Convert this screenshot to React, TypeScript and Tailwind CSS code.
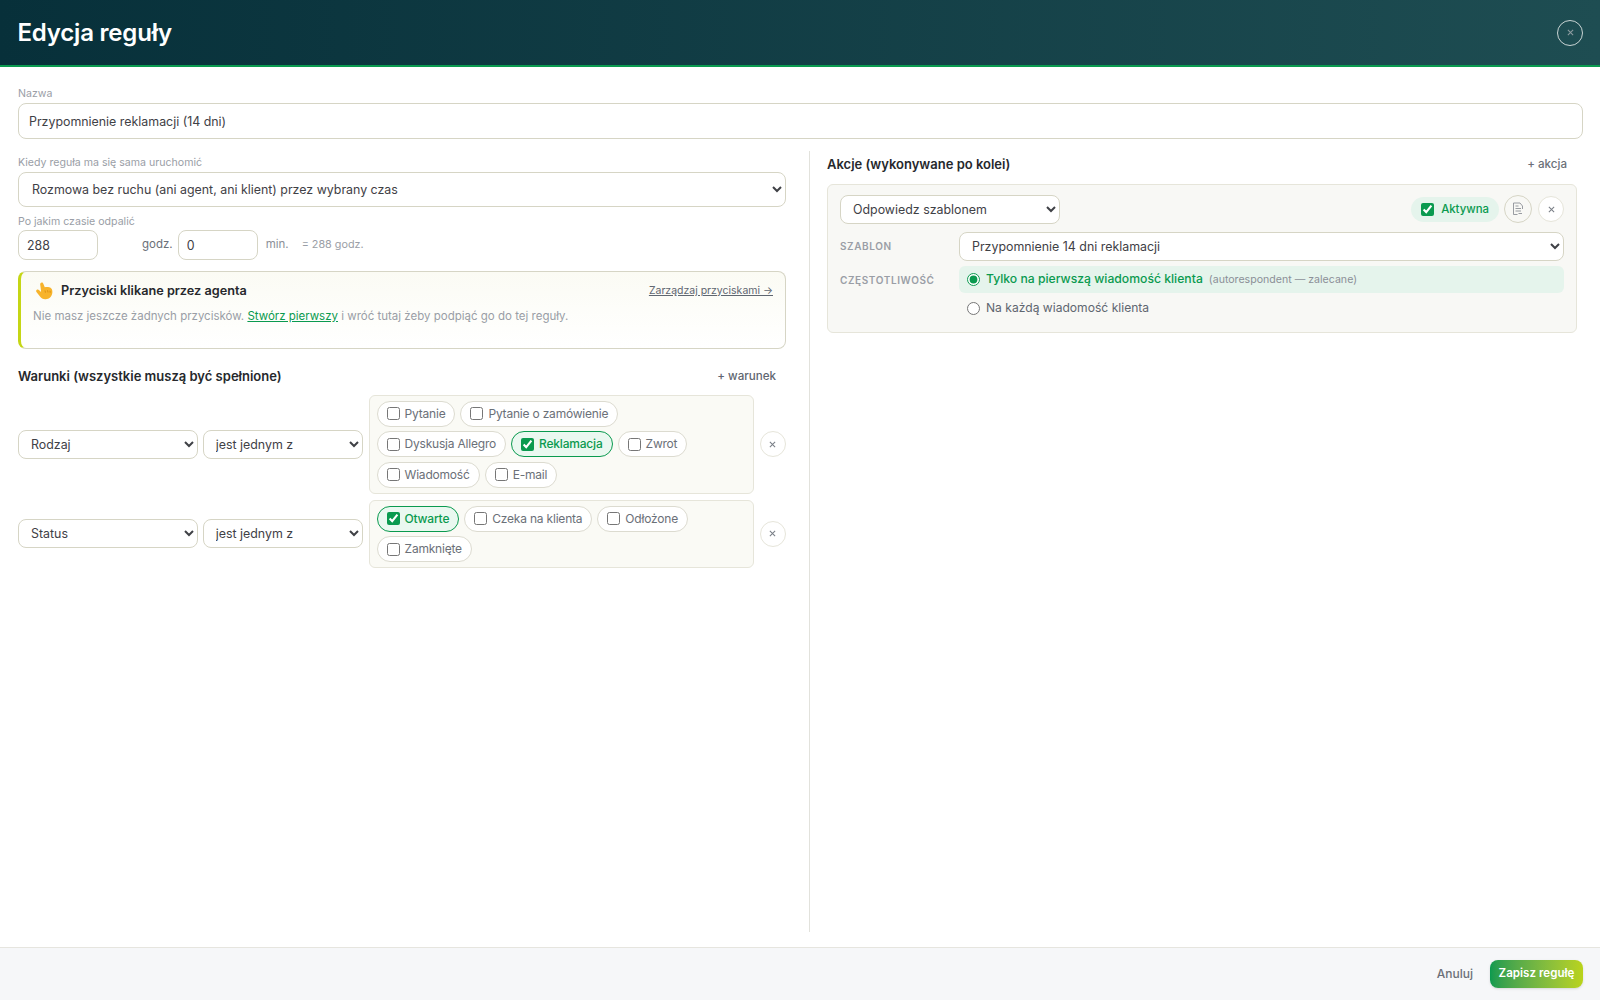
import React from 'react';

const FONT = "font-['Inter','Noto_Sans',sans-serif]";

const selectCls = 'bg-white border border-[#d6d5c5] rounded-lg text-[#3f4146] text-[12.4px] outline-none';

function XButton({ className = '' }: { className?: string }) {
  return (
    <button className={`w-[26px] h-[26px] rounded-full border border-[#e6e5da] bg-white flex items-center justify-center text-[#7a7f87] shrink-0 ${className}`}>
      <svg width="7" height="7" viewBox="0 0 8 8" fill="none" stroke="currentColor" strokeWidth="1.2"><path d="M1 1l6 6M7 1L1 7" /></svg>
    </button>
  );
}

function Chip({ label, checked = false }: { label: string; checked?: boolean }) {
  return (
    <label className={`h-[26px] flex items-center gap-[5px] rounded-full border pl-[9px] pr-[9px] text-[12px] tracking-[-0.2px] ${checked ? 'border-[#0a9a4f] bg-[#eaf8f0] text-[#0a9a4f] font-medium' : 'border-[#dcdbd0] bg-white text-[#6b7078]'}`}>
      <input type="checkbox" defaultChecked={checked} className="w-[13px] h-[13px] m-0 accent-[#0a9a4f]" />
      {label}
    </label>
  );
}

function ConditionRow({ field, chips }: { field: string; chips: { label: string; checked?: boolean }[][] }) {
  return (
    <div className="flex items-center">
      <select defaultValue={field} className={`${selectCls} w-[180px] h-[29px] pl-2`}>
        <option>{field}</option>
      </select>
      <select className={`${selectCls} w-[160px] h-[29px] pl-2 ml-[5px]`}>
        <option>jest jednym z</option>
      </select>
      <div className="ml-[6px] w-[386px] border border-[#e6e5da] rounded-md bg-[#fafaf5] pl-[7px] py-[5px] flex flex-col gap-[4.5px]">
        {chips.map((row, i) => (
          <div key={i} className="flex gap-[5px]">
            {row.map((c) => <Chip key={c.label} {...c} />)}
          </div>
        ))}
      </div>
      <XButton className="ml-[6px]" />
    </div>
  );
}

export default function App() {
  return (
    <div className={`h-screen flex flex-col bg-white ${FONT}`}>
      <header className="h-[67px] shrink-0 border-b-2 border-[#0a9a4f] bg-gradient-to-r from-[#07303a] to-[#1e4d52] flex items-center justify-between pl-[17.500px] pr-[17px]">
        <h1 className="text-[24px] font-semibold text-white tracking-[-0.2px]">Edycja reguły</h1>
        <button className="w-[26px] h-[26px] rounded-full border border-[#c9d4d4] flex items-center justify-center text-[#8d9ba0]">
          <svg width="7" height="7" viewBox="0 0 8 8" fill="none" stroke="currentColor" strokeWidth="1.2"><path d="M1 1l6 6M7 1L1 7" /></svg>
        </button>
      </header>

      <main className="flex-1 min-h-0 flex flex-col pl-[18px] pr-[17px] pt-[20px] pb-[15px]">
        <div className="text-[10.6px] leading-[14px] text-[#9a9ea6]">Nazwa</div>
        <input defaultValue="Przypomnienie reklamacji (14 dni)" className="mt-[2px] h-[36px] w-full border border-[#d6d5c5] rounded-lg px-[10px] text-[12.4px] text-[#3f4146] outline-none" />

        <div className="flex flex-1 min-h-0 mt-[12px]">
          {/* lewa kolumna */}
          <div className="w-[792px] pr-[23px] border-r border-[#e2e2dc] pt-[5px]">
            <div className="text-[10.6px] leading-[14px] text-[#9a9ea6]">Kiedy reguła ma się sama uruchomić</div>
            <select className={`${selectCls} mt-[2px] w-full h-[35px] pl-[9px]`}>
              <option>Rozmowa bez ruchu (ani agent, ani klient) przez wybrany czas</option>
            </select>
            <div className="mt-[8px] text-[10.6px] leading-[14px] text-[#9a9ea6]">Po jakim czasie odpalić</div>
            <div className="flex items-center mt-[1px] text-[11.5px]">
              <input defaultValue="288" className="w-[80px] h-[30px] border border-[#d6d5c5] rounded-lg px-[8px] text-[12.4px] text-[#3f4146] outline-none" />
              <span className="ml-[44px] text-[#6b7078]">godz.</span>
              <input defaultValue="0" className="ml-[5px] w-[80px] h-[30px] border border-[#d6d5c5] rounded-lg px-[8px] text-[12.4px] text-[#3f4146] outline-none" />
              <span className="ml-[8px] text-[#8b8f97]">min.</span>
              <span className="ml-[13px] text-[10.8px] text-[#9a9ea6]">= 288 godz.</span>
            </div>

            <section className="mt-[11px] h-[78px] border border-[#d6d5c5] border-l-[3px] border-l-[#c5d615] rounded-lg bg-gradient-to-b from-[#fbfbf4] to-white pl-[12px] pr-[12px] pt-[9px]">
              <div className="flex items-center h-[20px]">
                <svg width="20" height="20" viewBox="0 0 18 18" className="ml-[2px]">
                  <path d="M5.6 1.6c.8-.4 1.6.1 1.9.8l1.3 3.3c1.9-.4 4.4-.2 5.6.8 1.1.9 1.4 2.4 1.2 4-.3 2.4-1.700 5-4.900 5.700-2.900.6-5-.5-6.200-2.300L1.300 9.800c-.5-.8-.3-1.600.3-2 .7-.4 1.500-.2 2 .4l1.400 1.500.5-.4L4.700 3.300c-.2-.7.2-1.400.9-1.700z" fill="#f7b32b" />
                  <path d="M9 8.500l.4 2M11.300 8.300l.4 2M13.500 8.800l.2 1.800" stroke="#d98c10" strokeWidth=".8" fill="none" />
                </svg>
                <span className="ml-[6px] text-[12.7px] font-semibold text-[#26282c]">Przyciski klikane przez agenta</span>
                <a className="ml-auto text-[10.5px] text-[#5f6670] underline">Zarządzaj przyciskami →</a>
              </div>
              <p className="mt-[7px] text-[11.5px] text-[#9a9ea6]">
                Nie masz jeszcze żadnych przycisków. <a className="text-[#0a9a4f] underline">Stwórz pierwszy</a> i wróć tutaj żeby podpiąć go do tej reguły.
              </p>
            </section>

            <div className="mt-[18px] flex items-center justify-between pr-[10px]">
              <h2 className="text-[13px] font-semibold text-[#26282c]">Warunki (wszystkie muszą być spełnione)</h2>
              <button className="text-[11.6px] font-medium text-[#5f6670]">+ warunek</button>
            </div>

            <div className="mt-[8px] flex flex-col gap-[6px]">
              <ConditionRow
                field="Rodzaj"
                chips={[
                  [{ label: 'Pytanie' }, { label: 'Pytanie o zamówienie' }],
                  [{ label: 'Dyskusja Allegro' }, { label: 'Reklamacja', checked: true }, { label: 'Zwrot' }],
                  [{ label: 'Wiadomość' }, { label: 'E-mail' }],
                ]}
              />
              <ConditionRow
                field="Status"
                chips={[
                  [{ label: 'Otwarte', checked: true }, { label: 'Czeka na klienta' }, { label: 'Odłożone' }],
                  [{ label: 'Zamknięte' }],
                ]}
              />
            </div>
          </div>

          {/* prawa kolumna */}
          <div className="flex-1 pl-[17px] pt-[5px]">
            <div className="flex items-center justify-between pr-[16px] h-[17px]">
              <h2 className="text-[13px] font-semibold text-[#26282c]">Akcje (wykonywane po kolei)</h2>
              <button className="text-[11.6px] font-medium text-[#6b7078]">+ akcja</button>
            </div>
            <div className="mt-[11px] mr-[6px] h-[149px] border border-[#e6e5da] rounded-md bg-[#f8f8f5] pl-[12px] pr-[12px] pt-[9px]">
              <div className="flex items-center h-[30px]">
                <select className={`${selectCls} w-[220px] h-[29px] pl-[8px]`}>
                  <option>Odpowiedz szablonem</option>
                </select>
                <label className="ml-auto h-[25px] flex items-center gap-[7px] rounded-full bg-[#e5f4ec] pl-[10px] pr-[10px] text-[11.4px] font-medium text-[#0a9a4f]">
                  <input type="checkbox" defaultChecked className="w-[13px] h-[13px] m-0 accent-[#0a9a4f]" />
                  <span className="pt-[1px]">Aktywna</span>
                </label>
                <button className="ml-[5px] w-[28px] h-[28px] rounded-full border border-[#d6d5c5] flex items-center justify-center text-[#8d9198]">
                  <svg width="12" height="14" viewBox="0 0 12 14" fill="none" stroke="currentColor" strokeWidth=".9">
                    <path d="M1.500 1h6.500l2.500 3v3M1.500 1v11.500h4M3.500 4h3M3.500 6.500h5.500M3.500 9h5.500M6.500 11.500h3.500" />
                  </svg>
                </button>
                <XButton className="ml-[6px]" />
              </div>
              <div className="flex items-center mt-[8px]">
                <span className="w-[119px] text-[10px] font-semibold tracking-[0.6px] text-[#9a9ea6]">SZABLON</span>
                <select className={`${selectCls} flex-1 h-[29px] pl-[8px]`}>
                  <option>Przypomnienie 14 dni reklamacji</option>
                </select>
              </div>
              <div className="flex mt-[5px]">
                <span className="w-[119px] pt-[7px] text-[10px] font-semibold tracking-[0.6px] text-[#9a9ea6]">CZĘSTOTLIWOŚĆ</span>
                <div className="flex-1">
                  <label className="h-[27px] flex items-center rounded-md bg-[#e5f4ec] pl-[8px] text-[12.2px] font-medium text-[#0a9a4f]">
                    <input type="radio" name="freq" defaultChecked className="w-[13px] h-[13px] m-0 accent-[#0a9a4f]" />
                    <span className="ml-[6px]">Tylko na pierwszą wiadomość klienta</span>
                    <span className="ml-[6px] text-[10.6px] font-normal text-[#8b8f97]">(autorespondent — zalecane)</span>
                  </label>
                  <label className="h-[27px] mt-[2px] flex items-center pl-[8px] text-[12.100px] text-[#5f6670]">
                    <input type="radio" name="freq" className="w-[13px] h-[13px] m-0" />
                    <span className="ml-[6px]">Na każdą wiadomość klienta</span>
                  </label>
                </div>
              </div>
            </div>
          </div>
        </div>
      </main>

      <footer className="h-[53px] shrink-0 border-t border-[#e6e5df] bg-[#f6f7f9] flex items-center justify-end pr-[17px]">
        <button className="text-[12px] font-medium text-[#6b7078]">Anuluj</button>
        <button className="ml-[17px] h-[28px] w-[93px] rounded-lg bg-gradient-to-r from-[#0a9a4f] to-[#b9d31a] text-[11.6px] font-semibold text-white shadow-sm">Zapisz regułę</button>
      </footer>
    </div>
  );
}
